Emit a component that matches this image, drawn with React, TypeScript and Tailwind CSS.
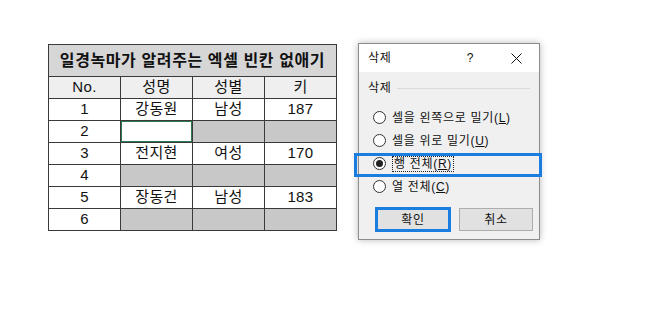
import React from 'react';

const FONT = { fontFamily: '"Liberation Sans", "Noto Sans CJK KR", sans-serif' };

type Cell = { text?: string; gray?: boolean; selected?: boolean };

const rows: Cell[][] = [
    [{ text: '1' }, { text: '강동원' }, { text: '남성' }, { text: '187' }],
    [{ text: '2' }, { selected: true }, { gray: true }, { gray: true }],
    [{ text: '3' }, { text: '전지현' }, { text: '여성' }, { text: '170' }],
    [{ text: '4' }, { gray: true }, { gray: true }, { gray: true }],
    [{ text: '5' }, { text: '장동건' }, { text: '남성' }, { text: '183' }],
    [{ text: '6' }, { gray: true }, { gray: true }, { gray: true }],
];

const SheetTable = () => (
    <div className="grid grid-cols-[72px_72px_72px_72px] border-l border-t border-[#3a3a3a] text-[15px] tracking-[0.4px] text-[#111]">
        {/* Title */}
        <div className="col-span-4 h-[32px] bg-[#d6d6d6] border-r border-b border-[#3a3a3a] flex items-center justify-center font-bold text-[16px] tracking-[0.6px]">
            일경녹마가 알려주는 엑셀 빈칸 없애기
        </div>
        {/* Header */}
        {['No.', '성명', '성별', '키'].map((h) => (
            <div key={h} className="h-[22px] bg-[#efefef] border-r border-b border-[#3a3a3a] flex items-center justify-center">
                {h}
            </div>
        ))}
        {rows.map((row, rIdx) =>
            row.map((cell, cIdx) => (
                <div
                    key={`${rIdx}-${cIdx}`}
                    className={`h-[22px] border-r border-b border-[#3a3a3a] flex items-center justify-center ${cell.gray ? 'bg-[#c8c8c8]' : 'bg-white'}`}
                >
                    {cell.selected ? (
                        <div className="w-full h-full border-[1.5px] border-[#2f7a50]" />
                    ) : (
                        cell.text
                    )}
                </div>
            ))
        )}
    </div>
);

const Radio = ({ checked, children }: { checked?: boolean; children: React.ReactNode }) => (
    <div className="h-[23px] flex items-center pl-[14px]">
        <span className="w-[13px] h-[13px] rounded-full border border-[#333] bg-white flex items-center justify-center">
            {checked && <span className="w-[7px] h-[7px] rounded-full bg-[#222]" />}
        </span>
        <span className="ml-[6px]">{children}</span>
    </div>
);

const DeleteDialog = () => (
    <div className="relative w-[182px] h-[197px] mt-[-1px] ml-[21px] bg-[#f0f0f0] border border-[#8c8c8c] shadow-[0_0_7px_rgba(0,0,0,0.28)] text-[12px] tracking-[0.7px] text-[#111]">
        {/* Title bar */}
        <div className="h-[28px] bg-white flex items-center pl-[9px]">
            <span>삭제</span>
            <span className="ml-auto">?</span>
            <svg width="11" height="11" viewBox="0 0 11 11" className="ml-[37px] mr-[17px]">
                <path d="M0.5 0.5 L10.5 10.5 M10.5 0.5 L0.5 10.5" stroke="#111" strokeWidth="1" />
            </svg>
        </div>

        <div className="px-[9px] pt-[8px]">
            <div className="h-[16px] flex items-center">
                <span>삭제</span>
                <span className="flex-1 ml-[6px] h-px bg-[#dadada]" />
            </div>
        </div>

        <div className="mt-[10px]">
            <Radio>
                셀을 왼쪽으로 밀기(<u>L</u>)
            </Radio>
            <Radio>
                셀을 위로 밀기(<u>U</u>)
            </Radio>
            <Radio checked>
                <span className="border border-dotted border-[#222] px-[1px]">
                    행 전체(<u>R</u>)
                </span>
            </Radio>
            <Radio>
                열 전체(<u>C</u>)
            </Radio>
        </div>

        <div className="flex items-center mt-[9px] pl-[16px]">
            <button className="w-[76px] h-[25px] bg-[#e1e1e1] border-[3px] border-[#1a7ee0] flex items-center justify-center">
                확인
            </button>
            <button className="ml-[8px] w-[74px] h-[23px] bg-[#e1e1e1] border border-[#adadad] flex items-center justify-center">
                취소
            </button>
        </div>

        {/* annotation highlight */}
        <div className="absolute left-[-5px] top-[109px] w-[188px] h-[24px] border-[3px] border-[#1a7ee0]" />
    </div>
);

export default function App() {
    return (
        <div className="w-[647px] h-[319px] bg-white flex items-start pl-[48px] pt-[44px]" style={FONT}>
            <SheetTable />
            <DeleteDialog />
        </div>
    );
}
